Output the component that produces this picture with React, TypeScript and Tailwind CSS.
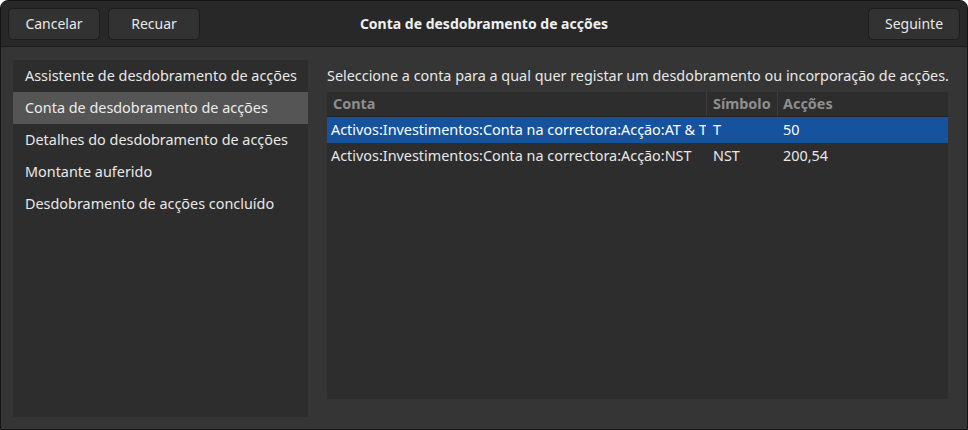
import React from 'react';

const pages = [
  'Assistente de desdobramento de acções',
  'Conta de desdobramento de acções',
  'Detalhes do desdobramento de acções',
  'Montante auferido',
  'Desdobramento de acções concluído',
];

const rows = [
  { conta: 'Activos:Investimentos:Conta na correctora:Acção:AT & T', simbolo: 'T', accoes: '50' },
  { conta: 'Activos:Investimentos:Conta na correctora:Acção:NST', simbolo: 'NST', accoes: '200,54' },
];

const HeaderButton: React.FC<{ label: string; className?: string }> = ({ label, className }) => (
  <button
    className={`h-[32px] rounded-[5px] border border-[#1c1c1c] bg-[#323232] text-[14px] text-[#e8e8e8] ${className ?? ''}`}
  >
    {label}
  </button>
);

export default function App() {
  const selectedPage = 1;
  const selectedRow = 0;

  return (
    <div
      className="flex h-[430px] w-[968px] flex-col overflow-hidden rounded-t-[8px] border border-[#151515] bg-[#353535] text-[#e8e8e8]"
      style={{ fontFamily: '"Noto Sans", "Open Sans", sans-serif' }}
    >
      {/* header bar */}
      <div className="flex h-[46px] shrink-0 items-center border-b border-[#1b1b1b] bg-[#282828] px-[7px]">
        <div className="flex w-[200px] gap-[8px]">
          <HeaderButton label="Cancelar" className="w-[92px]" />
          <HeaderButton label="Recuar" className="w-[92px]" />
        </div>
        <div className="flex-1 text-center text-[14px] font-bold text-[#f0f0f0]">
          Conta de desdobramento de acções
        </div>
        <div className="flex w-[200px] justify-end">
          <HeaderButton label="Seguinte" className="w-[92px]" />
        </div>
      </div>

      {/* body */}
      <div className="flex min-h-0 flex-1 gap-[19px] pl-[12px] pr-[19px] pt-[13px] pb-[12px]">
        <div className="w-[295px] shrink-0 bg-[#2d2d2d]">
          {pages.map((p, i) => (
            <div
              key={p}
              className={`flex h-[32px] items-center pb-[1px] pl-[12px] text-[14.4px] ${
                i === selectedPage ? 'bg-[#555555] text-[#ececec]' : 'text-[#e8e8e8]'
              }`}
            >
              {p}
            </div>
          ))}
        </div>

        <div className="flex min-w-0 flex-1 flex-col pb-[18px]">
          <div className="flex h-[32px] items-center pb-[1px] text-[14.4px] text-[#e8e8e8] whitespace-nowrap">
            Seleccione a conta para a qual quer registar um desdobramento ou incorporação de acções.
          </div>
          <div className="flex-1 bg-[#2d2d2d]">
            <div className="flex h-[25px] items-center border-b border-[#222222] text-[14.4px] font-bold text-[#8e8e8e]">
              <div className="w-[379px] pl-[6px]">Conta</div>
              <div className="h-full w-[71px] border-l border-[#3c3c3c] pl-[6px] leading-[24px]">Símbolo</div>
              <div className="h-full flex-1 border-l border-[#3c3c3c] pl-[5px] leading-[24px]">Acções</div>
            </div>
            {rows.map((r, i) => (
              <div
                key={r.conta}
                className={`flex h-[26px] items-center text-[14.4px] ${
                  i === selectedRow ? 'bg-[#15539e] text-white' : 'text-[#e8e8e8]'
                }`}
              >
                <div className="w-[379px] overflow-hidden whitespace-nowrap pl-[4px]">{r.conta}</div>
                <div className="w-[71px] pl-[7px]">{r.simbolo}</div>
                <div className="flex-1 pl-[6px]">{r.accoes}</div>
              </div>
            ))}
          </div>
        </div>
      </div>
    </div>
  );
}
